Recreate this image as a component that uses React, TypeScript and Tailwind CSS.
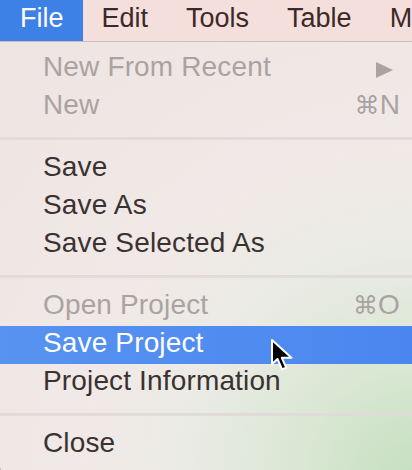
import React from "react";

type Item = {
  label: string;
  disabled?: boolean;
  active?: boolean;
  shortcut?: string;
  submenu?: boolean;
};

const groups: Item[][] = [
  [
    { label: "New From Recent", disabled: true, submenu: true },
    { label: "New", disabled: true, shortcut: "N" },
  ],
  [{ label: "Save" }, { label: "Save As" }, { label: "Save Selected As" }],
  [
    { label: "Open Project", disabled: true, shortcut: "O" },
    { label: "Save Project", active: true },
    { label: "Project Information" },
  ],
  [{ label: "Close" }],
];

const MenuRow = ({ item }: { item: Item }) => {
  const color = item.active
    ? "text-white bg-[linear-gradient(90deg,#5893f1,#4a86ef)]"
    : item.disabled
    ? "text-[#aaa3a1]"
    : "text-[#3a3231]";
  return (
    <div className={`flex h-[38px] items-start justify-between pl-[43px] pr-[12px] leading-[34px] tracking-[0.15px] ${color}`}>
      <span>{item.label}</span>
      {item.shortcut && (
        <span className="flex items-baseline">
          <span className="font-['DejaVu_Sans',sans-serif] text-[25px]">⌘</span>
          <span>{item.shortcut}</span>
        </span>
      )}
      {item.submenu && (
        <svg width="17" height="16" viewBox="0 0 17 16" className="mt-[12px] mr-[7px]">
          <polygon points="0,0 17,8 0,16" fill="#aaa3a1" />
        </svg>
      )}
    </div>
  );
};

const Separator = () => (
  <div className="mt-[11px] mb-[10px] h-[3px] w-full bg-[#e0d9d7]/90" />
);

export default function App() {
  const bar = ["Edit", "Tools", "Table", "M"];
  return (
    <div className="relative flex h-[470px] w-[412px] flex-col overflow-hidden bg-[#a9a5a4] font-['Liberation_Sans',sans-serif]">
      {/* menu bar */}
      <div className="flex h-[42px] shrink-0 border-b border-[#c7bfbd] bg-[#f5dfdc] text-[27px] text-[#3b2a28]">
        <div className="h-[41px] bg-[#3d80e6] pl-[20px] pr-[19px] leading-[37px] text-white">File</div>
        {bar.map((b) => (
          <div key={b} className="h-[41px] px-[19px] leading-[37px] whitespace-nowrap">
            {b}
          </div>
        ))}
      </div>

      {/* dropdown */}
      <div className="flex-1 rounded-bl-[10px] bg-[radial-gradient(circle_at_100%_100%,#c6dfc1_0px,#d9e7d3_110px,#ebebe5_230px,#f1e9e7_340px,#efe6e4_520px)] pt-[8px] text-[28px] mb-[-6px]">
        {groups.map((g, i) => (
          <div key={i}>
            {i > 0 && <Separator />}
            {g.map((item) => (
              <MenuRow key={item.label} item={item} />
            ))}
          </div>
        ))}
      </div>

      {/* mouse pointer */}
      <svg
        className="absolute left-[270px] top-[338px]"
        width="25"
        height="36"
        viewBox="0 0 25 36"
      >
        <path
          d="M2 2 L2 26 L7.5 21 L12 31.5 L16.2 29.6 L11.8 19.8 L21.5 19.8 Z"
          fill="#000"
          stroke="#fff"
          strokeWidth="2"
          strokeLinejoin="round"
        />
      </svg>
    </div>
  );
}
